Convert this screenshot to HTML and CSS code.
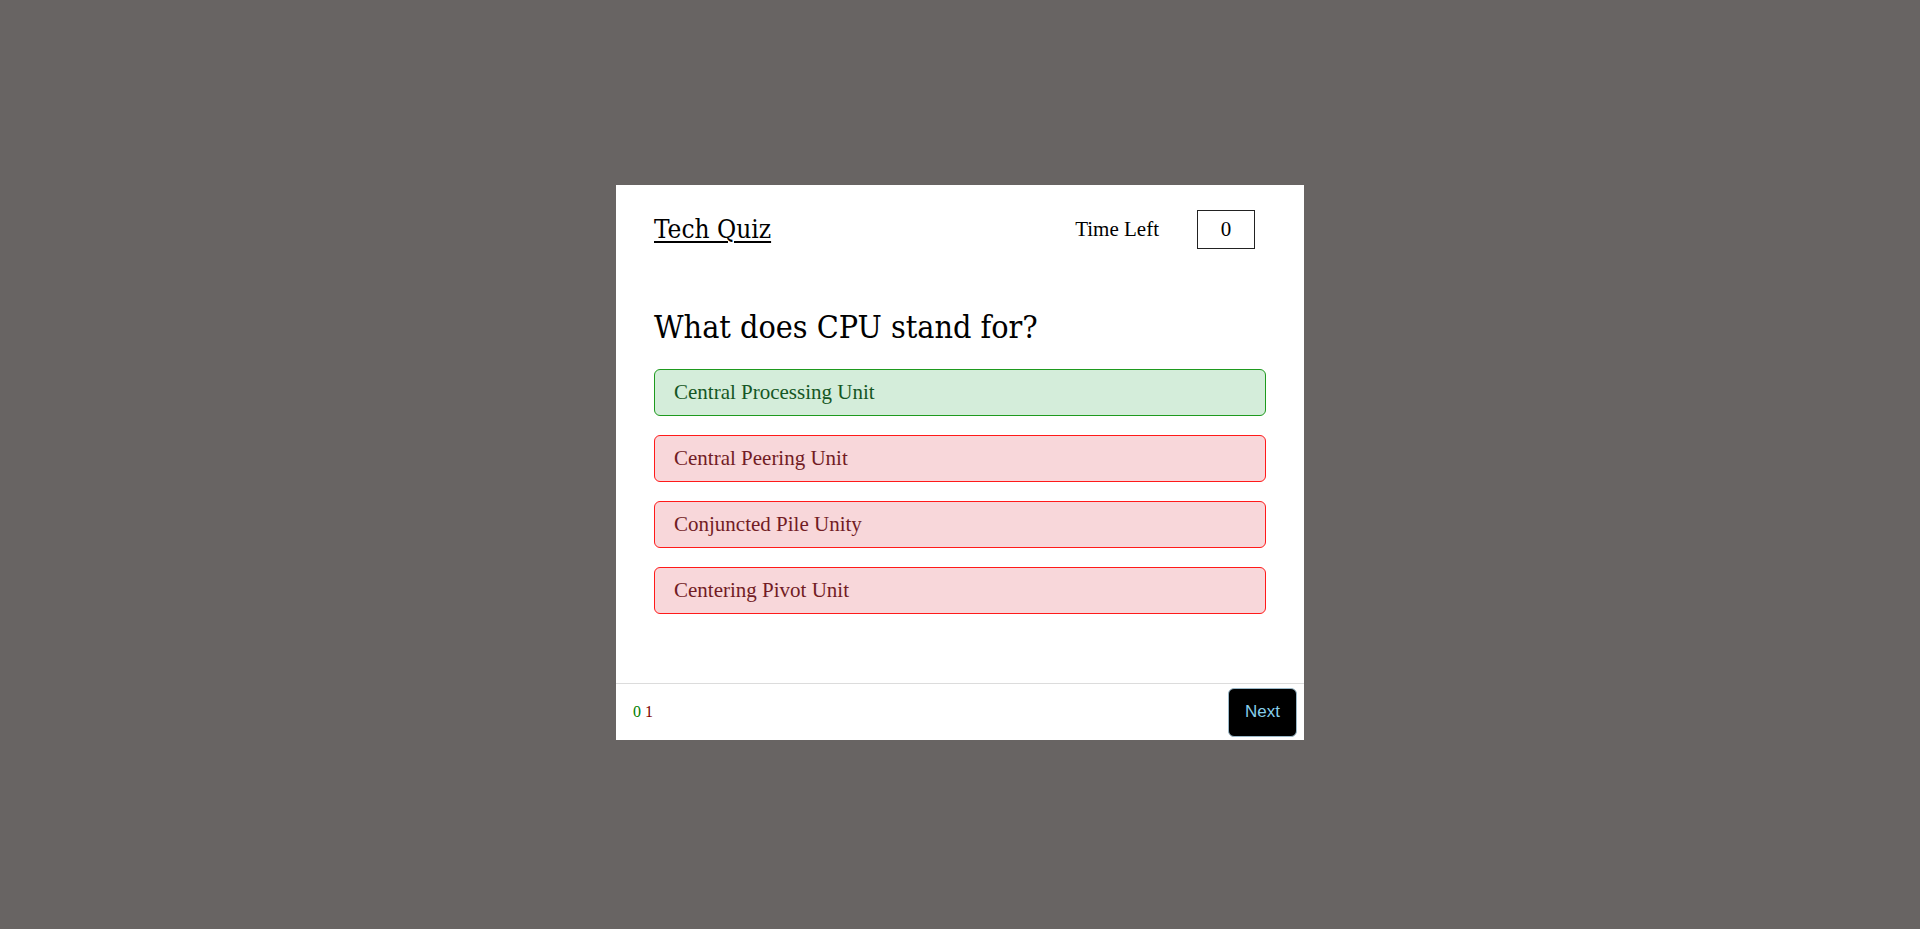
FILE: index.html
```html
<!DOCTYPE html>
<html lang="en">
<head>
<meta charset="utf-8">
<title>Tech Quiz</title>
<link rel="stylesheet" href="styles.css">
</head>
<body>
<div class="quiz-card">
  <div class="quiz-main">
    <header class="quiz-header">
      <a class="quiz-title" href="#">Tech Quiz</a>
      <div class="timer">
        <span class="timer-label">Time Left</span>
        <span class="timer-box">0</span>
      </div>
    </header>
    <h2 class="question">What does CPU stand for?</h2>
    <ul class="options">
      <li class="option correct">Central Processing Unit</li>
      <li class="option wrong">Central Peering Unit</li>
      <li class="option wrong">Conjuncted Pile Unity</li>
      <li class="option wrong">Centering Pivot Unit</li>
    </ul>
  </div>
  <footer class="quiz-footer">
    <div class="score"><span class="score-right">0</span> <span class="score-wrong">1</span></div>
    <button class="next-btn">Next</button>
  </footer>
</div>
</body>
</html>
```

FILE: styles.css
```css
html, body {
  margin: 0;
  padding: 0;
}
body {
  background: #686463;
  height: 929px;
  box-sizing: border-box;
  padding-top: 185px;
  display: flex;
  justify-content: center;
  align-items: flex-start;
  font-family: "Liberation Serif", "Times New Roman", serif;
}
.quiz-card {
  width: 688px;
  height: 555px;
  background: #fff;
  display: flex;
  flex-direction: column;
}
.quiz-main {
  height: 498px;
  box-sizing: border-box;
  padding: 24px 38px 0 38px;
}
.quiz-header {
  display: flex;
  align-items: center;
  justify-content: space-between;
  height: 40px;
}
.quiz-title {
  font-family: "DejaVu Serif Condensed", "DejaVu Serif", serif;
  font-size: 26px;
  color: #000;
  text-decoration: underline;
  text-decoration-thickness: 2px;
  text-underline-offset: 3px;
}
.timer {
  display: flex;
  align-items: center;
  gap: 38px;
  margin-right: 11px;
}
.timer-label {
  font-size: 21px;
  color: #000;
}
.timer-box {
  width: 56px;
  height: 37px;
  border: 1px solid #222;
  display: flex;
  align-items: center;
  justify-content: center;
  font-size: 21px;
}
.question {
  font-family: "DejaVu Serif Condensed", "DejaVu Serif", serif;
  font-weight: normal;
  font-size: 32px;
  line-height: 40px;
  margin: 58px 0 0 0;
  color: #000;
}
.options {
  list-style: none;
  margin: 22px 0 0 0;
  padding: 0;
  display: flex;
  flex-direction: column;
  gap: 19px;
}
.option {
  height: 45px;
  border-radius: 6px;
  padding: 0 19px;
  display: flex;
  align-items: center;
  font-size: 21px;
}
.option.correct {
  background: #d4edda;
  border: 1px solid #1e9a1e;
  color: #155724;
}
.option.wrong {
  background: #f8d7da;
  border: 1px solid #ff1a1a;
  color: #721c24;
}
.quiz-footer {
  height: 57px;
  box-sizing: border-box;
  border-top: 1px solid #dcdcdc;
  display: flex;
  align-items: center;
  justify-content: space-between;
  padding: 0 7px 0 17px;
}
.score {
  font-size: 16px;
}
.score-right { color: #008000; }
.score-wrong { color: #800000; }
.next-btn {
  width: 69px;
  height: 49px;
  background: #000;
  color: #87ceeb;
  border: 1px solid #9ab8c8;
  border-radius: 6px;
  font-family: "Liberation Sans", Arial, sans-serif;
  font-size: 17px;
}
```
